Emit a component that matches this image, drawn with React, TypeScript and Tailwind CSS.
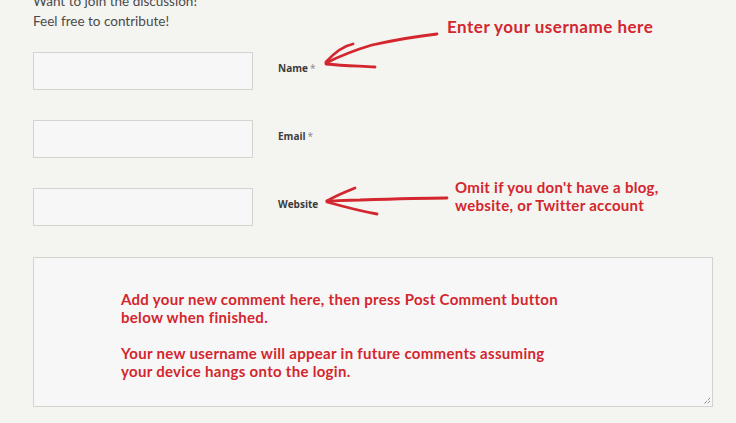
import React from "react";

const red = "#d3262e";

function Field({ label, required }: { label: string; required?: boolean }) {
  return (
    <div className="flex items-center">
      <div className="w-[220px] h-[38px] border border-[#d3d3d0] bg-[#f7f7f7]" />
      <div className="ml-[25px] mb-[5px] text-[10px] font-bold text-[#3c3c3c] [font-family:'Open_Sans',sans-serif]">
        {label}
        {required && <span className="font-normal text-[#888] ml-[2px]">*</span>}
      </div>
    </div>
  );
}

export default function App() {
  return (
    <div className="relative w-[736px] h-[423px] overflow-hidden bg-[#f4f4f0]">
      <div className="pl-[33px] mt-[-9px]">
        <div className="text-[13.5px] leading-[20px] text-[#4a4a4a] [font-family:'Lato',sans-serif]">
          <p>Want to join the discussion!</p>
          <p>Feel free to contribute!</p>
        </div>
        <div className="mt-[21px] flex flex-col gap-[30px]">
          <Field label="Name" required />
          <Field label="Email" required />
          <Field label="Website" />
        </div>
        <div className="relative mt-[31px] w-[680px] h-[150px] border border-[#d3d3d0] bg-[#f7f7f7] pl-[87px] pt-[32px]">
          <div
            className="text-[15px] leading-[18px] font-bold tracking-[0.3px] [font-family:'Lato',sans-serif]"
            style={{ color: red }}
          >
            <p>Add your new comment here, then press Post Comment button</p>
            <p>below when finished.</p>
            <p className="mt-[18px]">Your new username will appear in future comments assuming</p>
            <p>your device hangs onto the login.</p>
          </div>
          <svg className="absolute right-[1px] bottom-[1px]" width="9" height="9" viewBox="0 0 9 9">
            <path d="M8 2 L2 8 M8 5 L5 8" stroke="#555" strokeWidth="1" strokeDasharray="1 1" />
          </svg>
        </div>
      </div>

      <div
        className="absolute left-[447px] top-[17px] text-[17px] leading-[20px] font-bold tracking-[0.5px] [font-family:'Lato',sans-serif]"
        style={{ color: red }}
      >
        Enter your username here
      </div>
      <div
        className="absolute left-[455px] top-[178px] text-[15px] leading-[18px] font-bold tracking-[0.3px] [font-family:'Lato',sans-serif]"
        style={{ color: red }}
      >
        <p>Omit if you don't have a blog,</p>
        <p>website, or Twitter account</p>
      </div>

      <svg className="absolute left-0 top-0 pointer-events-none" width="736" height="423">
        <g fill="none" stroke={red} strokeWidth="2.8" strokeLinecap="round" strokeLinejoin="round">
          <path d="M437 34 C 410 37, 395 40, 372 45 C 355 50, 340 56, 326 63" />
          <path d="M353 44 C 343 46, 335 52, 326 62" />
          <path d="M326 64 C 345 66, 360 66, 375 67" />
          <path d="M447 198 C 420 198, 390 199, 360 200 C 345 200, 335 201, 327 201" />
          <path d="M355 188 C 345 192, 335 196, 327 201" />
          <path d="M327 202 C 345 207, 360 211, 377 214" />
        </g>
      </svg>
    </div>
  );
}
